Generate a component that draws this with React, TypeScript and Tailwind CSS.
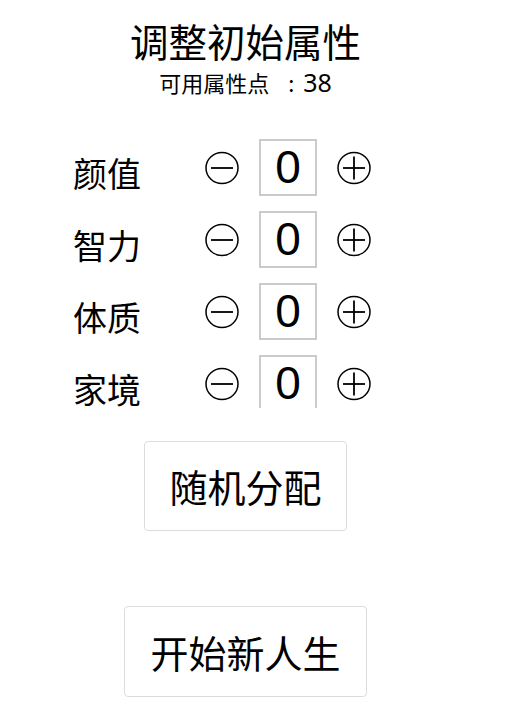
import React from "react";

function Minus() {
  return (
    <svg width="34" height="34" viewBox="0 0 34 34" className="shrink-0">
      <ellipse cx="17" cy="17" rx="16" ry="15.5" fill="none" stroke="#000" strokeWidth="1.5" />
      <line x1="6" y1="17" x2="28" y2="17" stroke="#000" strokeWidth="1.8" />
    </svg>
  );
}

function Plus() {
  return (
    <svg width="34" height="34" viewBox="0 0 34 34" className="shrink-0">
      <ellipse cx="17" cy="17" rx="16" ry="15.5" fill="none" stroke="#000" strokeWidth="1.5" />
      <line x1="6" y1="17" x2="28" y2="17" stroke="#000" strokeWidth="1.8" />
      <line x1="17" y1="5.5" x2="17" y2="28.5" stroke="#000" strokeWidth="1.8" />
    </svg>
  );
}

const rows = ["颜值", "智力", "体质", "家境"];

export default function App() {
  return (
    <div
      className="w-[491px] flex flex-col items-center bg-white text-black"
      style={{ fontFamily: '"Noto Sans CJK SC", "Noto Sans", sans-serif' }}
    >
      <div className="pt-[21px] text-[38.5px] leading-[38px]">调整初始属性</div>
      <div className="mt-[12px] text-[22px] leading-[22px] flex items-baseline">
        <span>可用属性点</span>
        <span className="ml-[19px] mr-[9px]">:</span>
        <span className="text-[25px]" style={{ fontFamily: '"Noto Sans", sans-serif' }}>38</span>
      </div>
      <div className="mt-[46px] self-stretch pl-[73px] h-[269px] overflow-hidden flex flex-col gap-[15px]">
        {rows.map((r) => (
          <div key={r} className="flex items-center h-[57px] shrink-0">
            <div className="w-[132px] text-[34px] leading-[34px] mt-[10px]">{r}</div>
            <Minus />
            <div
              className="ml-[20px] w-[58px] h-[57px] border-2 border-[#cbcbcb] flex items-center justify-center text-[46px]"
              style={{ fontFamily: '"Liberation Sans", Arial, sans-serif' }}
            >
              0
            </div>
            <div className="ml-[20px]">
              <Plus />
            </div>
          </div>
        ))}
      </div>
      <button className="mt-[33px] h-[90px] px-[24px] border border-[#dcdcdc] rounded-[4px] bg-white text-[38px] leading-[38px]">
        随机分配
      </button>
      <button className="mt-[75px] h-[91px] px-[25px] border border-[#dcdcdc] rounded-[4px] bg-white text-[38px] leading-[38px]">
        开始新人生
      </button>
    </div>
  );
}
